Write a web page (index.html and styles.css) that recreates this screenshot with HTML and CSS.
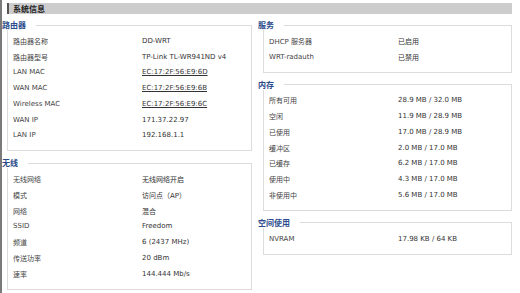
FILE: index.html
```html
<!DOCTYPE html>
<html lang="zh-CN">
<head>
    <meta charset="UTF-8">
    <meta name="viewport" content="width=device-width, initial-scale=1.0">
    <title>系统信息</title>
    <link rel="stylesheet" href="styles.css">
</head>
<body>

    <!-- 标题栏 -->
    <div class="title-bar">
        <h2>系统信息</h2>
    </div>

    <div class="columns">
        <!-- 左栏 -->
        <div class="column">
            <fieldset class="box">
                <legend>路由器</legend>
                <div class="row"><span class="label">路由器名称</span><span class="value">DD-WRT</span></div>
                <div class="row"><span class="label">路由器型号</span><span class="value">TP-Link TL-WR941ND v4</span></div>
                <div class="row"><span class="label">LAN MAC</span><span class="value mac">EC:17:2F:56:E9:6D</span></div>
                <div class="row"><span class="label">WAN MAC</span><span class="value mac">EC:17:2F:56:E9:6B</span></div>
                <div class="row"><span class="label">Wireless MAC</span><span class="value mac">EC:17:2F:56:E9:6C</span></div>
                <div class="row"><span class="label">WAN IP</span><span class="value">171.37.22.97</span></div>
                <div class="row"><span class="label">LAN IP</span><span class="value">192.168.1.1</span></div>
            </fieldset>

            <fieldset class="box">
                <legend>无线</legend>
                <div class="row"><span class="label">无线网络</span><span class="value">无线网络开启</span></div>
                <div class="row"><span class="label">模式</span><span class="value">访问点（AP）</span></div>
                <div class="row"><span class="label">网络</span><span class="value">混合</span></div>
                <div class="row"><span class="label">SSID</span><span class="value">Freedom</span></div>
                <div class="row"><span class="label">频道</span><span class="value">6 (2437 MHz)</span></div>
                <div class="row"><span class="label">传送功率</span><span class="value">20 dBm</span></div>
                <div class="row"><span class="label">速率</span><span class="value">144.444 Mb/s</span></div>
            </fieldset>
        </div>

        <!-- 右栏 -->
        <div class="column">
            <fieldset class="box">
                <legend>服务</legend>
                <div class="row"><span class="label">DHCP 服务器</span><span class="value">已启用</span></div>
                <div class="row"><span class="label">WRT-radauth</span><span class="value">已禁用</span></div>
            </fieldset>

            <fieldset class="box">
                <legend>内存</legend>
                <div class="row"><span class="label">所有可用</span><span class="value">28.9 MB / 32.0 MB</span></div>
                <div class="row"><span class="label">空闲</span><span class="value">11.9 MB / 28.9 MB</span></div>
                <div class="row"><span class="label">已使用</span><span class="value">17.0 MB / 28.9 MB</span></div>
                <div class="row"><span class="label">缓冲区</span><span class="value">2.0 MB / 17.0 MB</span></div>
                <div class="row"><span class="label">已缓存</span><span class="value">6.2 MB / 17.0 MB</span></div>
                <div class="row"><span class="label">使用中</span><span class="value">4.3 MB / 17.0 MB</span></div>
                <div class="row"><span class="label">非使用中</span><span class="value">5.6 MB / 17.0 MB</span></div>
            </fieldset>

            <fieldset class="box">
                <legend>空间使用</legend>
                <div class="row"><span class="label">NVRAM</span><span class="value">17.98 KB / 64 KB</span></div>
            </fieldset>
        </div>
    </div>

</body>
</html>
```

FILE: styles.css
```css
/* 全局 */
* {
    margin: 0;
    padding: 0;
    box-sizing: border-box;
}

body {
    font-family: "DejaVu Sans", "Noto Sans CJK SC", sans-serif;
    font-size: 7px;
    color: #333;
    background-color: #fff;
    border-left: 2px solid #7a7a7a;
    min-height: 293px;
    padding: 3px 8px 0 5px;
    overflow: hidden;
}

/* 标题栏 */
.title-bar {
    height: 11px;
    background-color: #cdcdcd;
    border-left: 2px solid #555;
    padding-left: 4px;
}

.title-bar h2 {
    font-family: "Noto Sans CJK SC", sans-serif;
    font-size: 8px;
    font-weight: bold;
    line-height: 11px;
    color: #222;
}

/* 两栏 */
.columns {
    display: grid;
    grid-template-columns: 245px 249px;
    column-gap: 11px;
    margin-top: 6px;
}

.column {
    display: flex;
    flex-direction: column;
    gap: 7px;
}

/* 分组框 */
.box {
    border: 1px solid #dcdcdc;
    padding: 3px 0 7px 5px;
    min-width: 0;
}

.box legend {
    font-family: "Noto Sans CJK SC", sans-serif;
    font-size: 8px;
    font-weight: bold;
    color: #2b4c8c;
    margin-left: -11px;
    padding: 0 10px 0 0;
    line-height: 10px;
}

.row {
    display: flex;
    align-items: center;
    height: 15.75px;
    white-space: nowrap;
}

.label {
    width: 129px;
    flex-shrink: 0;
    color: #444;
}

.value {
    color: #333;
}

.mac {
    text-decoration: underline;
}
```
